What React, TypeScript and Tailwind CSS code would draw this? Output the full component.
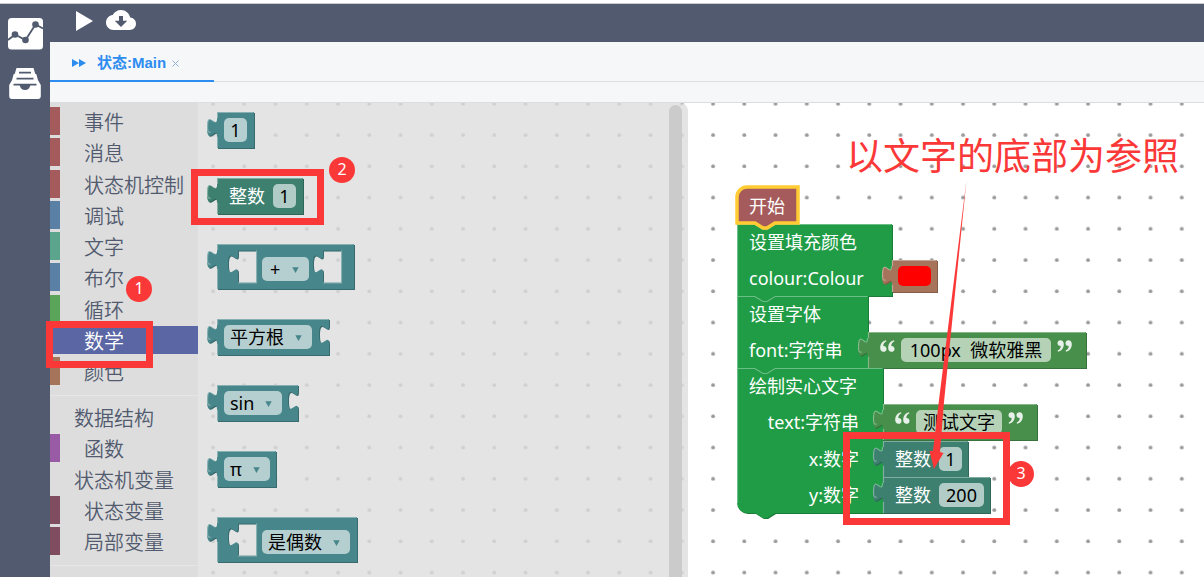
import React from "react";
import { IoMdCloudDownload } from "react-icons/io";

const MATH = "#47868a";
const INTEGER = "#3d8070";
const CANVAS = "#209c46";
const STRING = "#478f4b";
const COLOUR = "#a5745b";
const EVENT = "#a55b5b";

const TAB_DOWN = "c0,12.5 -10,-10 -10,9.4 s10,-3.1 10,9.4";
const TAB_UP = "c0,-12.5 -10,10 -10,-9.4 s10,3.1 10,-9.4";
const TAB_TOP = 6;
const TAB_BOTTOM = 24.8;

type Hole = { x: number; w: number; h: number };

type ShapeProps = {
  w: number;
  h: number;
  fill: string;
  tab?: boolean;
  sockets?: number[];
  holes?: Hole[];
  notchTop?: boolean;
  notchBottom?: boolean;
  roundTop?: boolean;
  roundBottom?: boolean;
  selected?: boolean;
};

/** Puzzle-piece outline drawn behind a block's fields; the last pixel holds its shadow. */
function Shape(p: ShapeProps) {
  const w = p.w - 1;
  const h = p.h - 1;
  let d = p.roundTop ? "M0,10 A10,10 0 0 1 10,0" : "M0,0";
  let light = p.roundTop ? "M0.5,10 A10,10 0 0 1 10,0.5" : "M0.5,0.5";
  if (p.notchTop) {
    d += " H18 l8,5 h4 l8,-5";
    light += " H18 l8,5 h4 l8,-5";
  }
  d += ` H${w}`;
  light += ` H${w - 0.5}`;
  (p.sockets ?? []).forEach((y) => {
    d += ` V${y + TAB_TOP} ${TAB_DOWN}`;
  });
  d += ` V${h}`;
  if (p.notchBottom) d += " H38 l-8,5 h-4 l-8,-5";
  d += p.roundBottom ? ` H10 A10,10 0 0 1 0,${h - 10}` : " H0";
  const bottom = p.roundBottom ? h - 10 : h;
  if (p.tab) {
    d += ` V${TAB_BOTTOM} ${TAB_UP}`;
    light += ` M0.5,${h} V${TAB_BOTTOM} M0.5,${TAB_TOP} V0`;
    light += ` M-0.5,${TAB_TOP} c0,12.5 -9,-10 -9,9.4 q0,6 3,4.5`;
  } else {
    light += ` M0.5,${bottom} V${p.roundTop ? 10 : 0}`;
  }
  d += " Z";
  (p.holes ?? []).forEach((o) => {
    d += ` M${o.x},6.5 H${o.x + o.w} V${6.5 + o.h} H${o.x} V${6.5 + TAB_BOTTOM - 2} ${TAB_UP} Z`;
    light += ` M${o.x},${7 + o.h} H${o.x + o.w + 0.5} V6.5`;
  });
  return (
    <svg
      className="absolute left-0 top-0 overflow-visible"
      width={p.w}
      height={p.h}
      aria-hidden="true"
    >
      {p.selected ? (
        <path d={d} fill={p.fill} stroke="#fc3" strokeWidth="3.5" />
      ) : (
        <>
          <path d={d} fill={p.fill} fillRule="evenodd" transform="translate(1 1)" />
          <path d={d} fill="#000" fillOpacity="0.2" fillRule="evenodd" transform="translate(1 1)" />
          <path d={d} fill={p.fill} fillRule="evenodd" />
          <path d={light} fill="none" stroke="#fff" strokeOpacity="0.35" strokeWidth="1.2" />
        </>
      )}
    </svg>
  );
}

function Block({
  className,
  children,
  ...shape
}: ShapeProps & { className: string; children: React.ReactNode }) {
  return (
    <div className={`relative shrink-0 ${className}`}>
      <Shape {...shape} />
      <div className="relative flex h-full items-center">{children}</div>
    </div>
  );
}

function TextField({ label, value, width }: { label: string; value: string; width: string }) {
  return (
    <input
      aria-label={label}
      defaultValue={value}
      className={`h-6 rounded-[5px] bg-white/60 text-center text-lg leading-6 text-black outline-none ${width}`}
    />
  );
}

function SelectField({
  label,
  value,
  width,
  pad = "pl-[6px]",
}: {
  label: string;
  value: string;
  width: string;
  pad?: string;
}) {
  return (
    <span className={`relative flex h-6 items-center ${width}`}>
      <select
        aria-label={label}
        className={`h-6 w-full appearance-none rounded-[5px] bg-white/60 text-lg leading-6 text-black outline-none ${pad}`}
      >
        <option>{value}</option>
      </select>
      <svg className="absolute right-[10px] top-[10px]" width="7" height="6" aria-hidden="true">
        <path d="M0.3,0.3 H6.7 L3.5,6 Z" fill={MATH} />
      </svg>
    </span>
  );
}

function Quote({ close = false }: { close?: boolean }) {
  return (
    <svg
      className={close ? "mb-2 rotate-180" : "mb-2"}
      width="15"
      height="12"
      viewBox="0 0 15 12"
      fill="#fff"
      fillOpacity="0.88"
      aria-hidden="true"
    >
      <path d="M5.9,0.2 C2.2,1.2 0.2,4 0.2,7.7 C0.2,10.3 1.5,11.8 3.5,11.8 C5.3,11.8 6.5,10.6 6.5,8.9 C6.5,7.1 5.4,6 3.3,6 C3.2,3.8 4.3,2.3 6.5,1.3 Z" />
      <path d="M13.9,0.2 C10.2,1.2 8.2,4 8.2,7.7 C8.2,10.3 9.5,11.8 11.5,11.8 C13.3,11.8 14.5,10.6 14.5,8.9 C14.5,7.1 13.4,6 11.3,6 C11.2,3.8 12.3,2.3 14.5,1.3 Z" />
    </svg>
  );
}

function IntegerBlock({
  value,
  w,
  className,
  field,
}: {
  value: string;
  w: number;
  className: string;
  field: string;
}) {
  return (
    <Block w={w} h={37} fill={INTEGER} tab className={className}>
      <span className="ml-3 mr-2 text-lg text-white">整数</span>
      <TextField label="整数" value={value} width={field} />
    </Block>
  );
}

function StringBlock({
  value,
  w,
  className,
  field,
}: {
  value: string;
  w: number;
  className: string;
  field: string;
}) {
  return (
    <Block w={w} h={37} fill={STRING} tab className={className}>
      <div className="ml-3 flex items-center gap-[6px]">
        <Quote />
        <TextField label="字符串" value={value} width={field} />
        <Quote close />
      </div>
    </Block>
  );
}

function InputRow({
  label,
  width,
  alignRight = false,
  children,
}: {
  label: string;
  width: string;
  alignRight?: boolean;
  children: React.ReactNode;
}) {
  return (
    <div className="flex h-9">
      <span
        className={`flex shrink-0 items-center pl-3 pr-6 ${alignRight ? "justify-end" : ""} ${width}`}
      >
        {label}
      </span>
      {children}
    </div>
  );
}

function Flyout() {
  return (
    <section
      aria-label="数学"
      className="relative flex w-[490px] shrink-0 justify-between overflow-hidden rounded-tr-lg bg-[#ddd]/80"
    >
      <div className="flex flex-col items-start gap-[30px] pl-[19px] pt-[9px]">
        <Block w={38} h={37} fill={MATH} tab className="h-9 w-[38px] pl-[7px]">
          <TextField label="数字" value="1" width="w-[23px]" />
        </Block>
        <IntegerBlock value="1" w={87} className="h-9 w-[87px]" field="w-[23px]" />
        <Block
          w={138}
          h={46}
          fill={MATH}
          tab
          holes={[
            { x: 21, w: 18, h: 32 },
            { x: 106, w: 18, h: 32 },
          ]}
          className="h-[45px] w-[138px] pl-[45px] pt-1"
        >
          <SelectField label="运算" value="+" width="w-[47px]" pad="pl-2" />
        </Block>
        <Block w={113} h={37} fill={MATH} tab sockets={[0]} className="h-9 w-[113px] pl-[7px]">
          <SelectField label="函数" value="平方根" width="w-[88px]" />
        </Block>
        <Block w={82} h={37} fill={MATH} tab sockets={[0]} className="h-9 w-[82px] pl-[7px]">
          <SelectField label="三角函数" value="sin" width="w-[58px]" />
        </Block>
        <Block w={60} h={37} fill={MATH} tab className="h-9 w-[60px] pl-[7px]">
          <SelectField label="常量" value="π" width="w-[46px]" />
        </Block>
        <Block
          w={141}
          h={46}
          fill={MATH}
          tab
          holes={[{ x: 21, w: 18, h: 32 }]}
          className="h-[45px] w-[141px] pl-[45px] pt-1"
        >
          <SelectField label="判断" value="是偶数" width="w-[88px]" />
        </Block>
      </div>
      <div className="mr-[6px] mt-[2px] w-[13px] rounded-t-full bg-[#cbcbcb]" />
    </section>
  );
}

function Program() {
  return (
    <div className="absolute left-[49px] top-[84px] flex flex-col items-start text-lg text-white">
      <Block w={62} h={37} fill={EVENT} roundTop notchBottom selected className="z-10 h-[37px] w-[62px]">
        <span className="ml-3">开始</span>
      </Block>
      <div className="relative">
        <Shape w={156} h={73} fill={CANVAS} notchTop notchBottom />
        <div className="relative">
          <div className="flex h-9 items-center pl-3">设置填充颜色</div>
          <InputRow label="colour:Colour" width="w-[155px]">
            <Block w={46} h={33} fill={COLOUR} tab className="h-8 w-[46px] pl-[6px]">
              <button aria-label="颜色" className="h-5 w-[33px] rounded-[5px] bg-[#f00]" />
            </Block>
          </InputRow>
        </div>
      </div>
      <div className="relative">
        <Shape w={132} h={73} fill={CANVAS} notchTop notchBottom />
        <div className="relative">
          <div className="flex h-9 items-center pl-3">设置字体</div>
          <InputRow label="font:字符串" width="w-[131px]">
            <StringBlock value="100px  微软雅黑" w={219} className="h-9 w-[219px]" field="w-[150px]" />
          </InputRow>
        </div>
      </div>
      <div className="relative">
        <Shape w={147} h={146} fill={CANVAS} notchTop notchBottom roundBottom />
        <div className="relative">
          <div className="flex h-9 items-center pl-3">绘制实心文字</div>
          <InputRow label="text:字符串" width="w-[146px]" alignRight>
            <StringBlock value="测试文字" w={155} className="h-9 w-[155px]" field="w-[86px]" />
          </InputRow>
          <div className="pt-px">
            <InputRow label="x:数字" width="w-[146px]" alignRight>
              <IntegerBlock value="1" w={86} className="h-9 w-[86px]" field="w-[23px]" />
            </InputRow>
            <InputRow label="y:数字" width="w-[146px]" alignRight>
              <IntegerBlock value="200" w={108} className="h-9 w-[108px]" field="w-[45px]" />
            </InputRow>
          </div>
        </div>
      </div>
    </div>
  );
}

type Category = { name: string; bar?: string; selected?: boolean };

const GROUP_ONE: Category[] = [
  { name: "事件", bar: "bg-[#a55b5b]" },
  { name: "消息", bar: "bg-[#a55b5b]" },
  { name: "状态机控制", bar: "bg-[#a55b5b]" },
  { name: "调试", bar: "bg-[#5b80a5]" },
  { name: "文字", bar: "bg-[#5ba58c]" },
  { name: "布尔", bar: "bg-[#5b80a5]" },
  { name: "循环", bar: "bg-[#5ba55b]" },
  { name: "数学", bar: "bg-[#5b67a5]", selected: true },
  { name: "颜色", bar: "bg-[#a5745b]" },
];

const GROUP_TWO: Category[] = [
  { name: "数据结构" },
  { name: "函数", bar: "bg-[#995ba5]" },
  { name: "状态机变量" },
  { name: "状态变量", bar: "bg-[#804d60]" },
  { name: "局部变量", bar: "bg-[#804d60]" },
];

function CategoryRow({ name, bar, selected }: Category) {
  return (
    <li>
      <button
        className={`flex h-7 w-full items-center text-left text-xl leading-7 ${
          selected ? "bg-[#5b67a5] text-white" : "text-[#515a6e]"
        }`}
      >
        {bar && <span className={`h-7 w-[10px] ${bar}`} />}
        <span className="pl-6 pt-1 font-[350]">{name}</span>
      </button>
    </li>
  );
}

function Toolbox() {
  return (
    <nav aria-label="积木分类" className="w-[148px] shrink-0 overflow-hidden bg-[#ddd] pt-1">
      <ul className="flex h-[278px] flex-col justify-between">
        {GROUP_ONE.map((c) => (
          <CategoryRow key={c.name} {...c} />
        ))}
      </ul>
      <hr className="mb-[7px] mt-[10px] border-[#e6e6e6]" />
      <ul className="flex flex-col gap-[3px]">
        {GROUP_TWO.map((c) => (
          <CategoryRow key={c.name} {...c} />
        ))}
      </ul>
      <hr className="mt-[10px] border-[#e6e6e6]" />
    </nav>
  );
}

function Sidebar() {
  return (
    <aside className="flex w-[50px] shrink-0 flex-col items-center gap-[18px] bg-[#515a6e] pt-[14px]">
      <button aria-label="图表">
        <svg width="35" height="32" viewBox="0 0 35 32">
          <rect width="35" height="31.5" rx="3.5" fill="#fff" />
          <path d="M0,22 L7,16.5 L17.5,22 L27.5,6.5 L35,10.5" fill="none" stroke="#515a6e" strokeWidth="1.8" />
          <circle cx="7" cy="16.5" r="3.3" fill="#515a6e" />
          <circle cx="17.5" cy="22" r="3.3" fill="#515a6e" />
          <circle cx="27.5" cy="6.5" r="3.3" fill="#515a6e" />
        </svg>
      </button>
      <button aria-label="文件">
        <svg width="32" height="31" viewBox="0 0 32 31">
          <path
            d="M7.5,0 H24.5 L26.3,6 H27.3 L29,12.3 L31.8,17 V28 Q31.8,31 29,31 H3 Q0.2,31 0.2,28 V17 L3,12.3 L4.7,6 H5.7 Z"
            fill="#fff"
          />
          <path
            d="M10,4.7 H22 M7.5,10.7 H24.5 M4.5,16.7 H27.5"
            stroke="#515a6e"
            strokeWidth="1.8"
          />
          <path d="M10.5,16.5 H21.5 Q20.5,22 16,22 Q11.5,22 10.5,16.5 Z" fill="#515a6e" />
        </svg>
      </button>
    </aside>
  );
}

function Badge({ n, className }: { n: string; className: string }) {
  return (
    <span
      className={`absolute flex h-[26px] w-[26px] items-center justify-center rounded-full bg-[#fb3838] pb-[2px] text-base leading-none text-white ${className}`}
    >
      {n}
    </span>
  );
}

function Annotations() {
  return (
    <div className="pointer-events-none absolute inset-0 z-20 overflow-hidden">
      <div className="absolute left-[46px] top-[321px] h-[47px] w-[107px] border-7 border-[#fb3838]" />
      <div className="absolute left-[191px] top-[169px] h-14 w-[133px] border-7 border-[#fb3838]" />
      <div className="absolute left-[843px] top-[432px] h-[93px] w-[167px] border-7 border-[#fb3838]" />
      <Badge n="1" className="left-[126px] top-[276px]" />
      <Badge n="2" className="left-[329px] top-[157px]" />
      <Badge n="3" className="left-[1008px] top-[461px]" />
      <p className="absolute left-[846px] top-[136px] whitespace-nowrap text-[37px] leading-10 text-[#fb3838]">
        以文字的底部为参照
      </p>
      <svg className="absolute left-[920px] top-[180px]" width="60" height="292" aria-hidden="true">
        <path d="M46.5,0 L24,222 L20,272 L23.5,273 L14,289 L9.5,271 L13,271 L19,220 Z" fill="#fb3838" />
      </svg>
    </div>
  );
}

export default function App() {
  return (
    <div className="relative flex h-screen flex-col overflow-hidden bg-white font-['Noto_Sans','Noto_Sans_CJK_SC',sans-serif]">
      <div className="h-1 shrink-0 border-b border-[#ccc] bg-white" />
      <div className="flex min-h-0 flex-1">
        <Sidebar />
        <div className="flex min-w-0 flex-1 flex-col">
          <header className="flex h-[38px] shrink-0 items-start gap-3 bg-[#515a6e] pl-[26px] text-white">
            <button aria-label="运行" className="mt-[7px]">
              <svg width="17" height="20" viewBox="0 0 17 20">
                <path d="M0,0 L17,10 L0,20 Z" fill="#fff" />
              </svg>
            </button>
            <button aria-label="下载">
              <IoMdCloudDownload size={32} />
            </button>
          </header>
          <div className="flex h-10 shrink-0 border-b border-[#dcdee2] bg-[#f5f7f9]">
            <button className="flex h-10 w-[164px] items-center border-b-2 border-[#2d8cf0] pl-[22px] pt-1 font-['Liberation_Sans','Noto_Sans_CJK_SC',sans-serif] text-[15px] font-bold text-[#2d8cf0]">
              <svg className="mr-[11px]" width="14" height="8" viewBox="0 0 14 8" aria-hidden="true">
                <path d="M0,0 L7,4 L0,8 Z M7,0 L14,4 L7,8 Z" fill="#2d8cf0" />
              </svg>
              <span>状态:Main</span>
              <svg className="ml-[6px]" width="7" height="7" viewBox="0 0 7 7" aria-hidden="true">
                <path d="M0.5,0.5 L6.5,6.5 M6.5,0.5 L0.5,6.5" stroke="#8fb0dc" />
              </svg>
            </button>
          </div>
          <div className="h-[21px] shrink-0 border-b border-[#ddd] bg-[#f5f7f9]" />
          <main className="relative flex min-h-0 flex-1 overflow-hidden bg-white">
            <svg className="absolute left-0 top-0 h-full w-full" aria-hidden="true">
              <defs>
                <pattern id="grid" x="-9" y="-15" width="31.25" height="31.25" patternUnits="userSpaceOnUse">
                  <circle cx="15.8" cy="15.8" r="1.9" fill="#999" />
                </pattern>
              </defs>
              <rect width="100%" height="100%" fill="url(#grid)" />
            </svg>
            <div className="relative z-10 flex">
              <Toolbox />
              <Flyout />
            </div>
            <div className="relative min-w-0 flex-1">
              <Program />
            </div>
          </main>
        </div>
      </div>
      <Annotations />
    </div>
  );
}
